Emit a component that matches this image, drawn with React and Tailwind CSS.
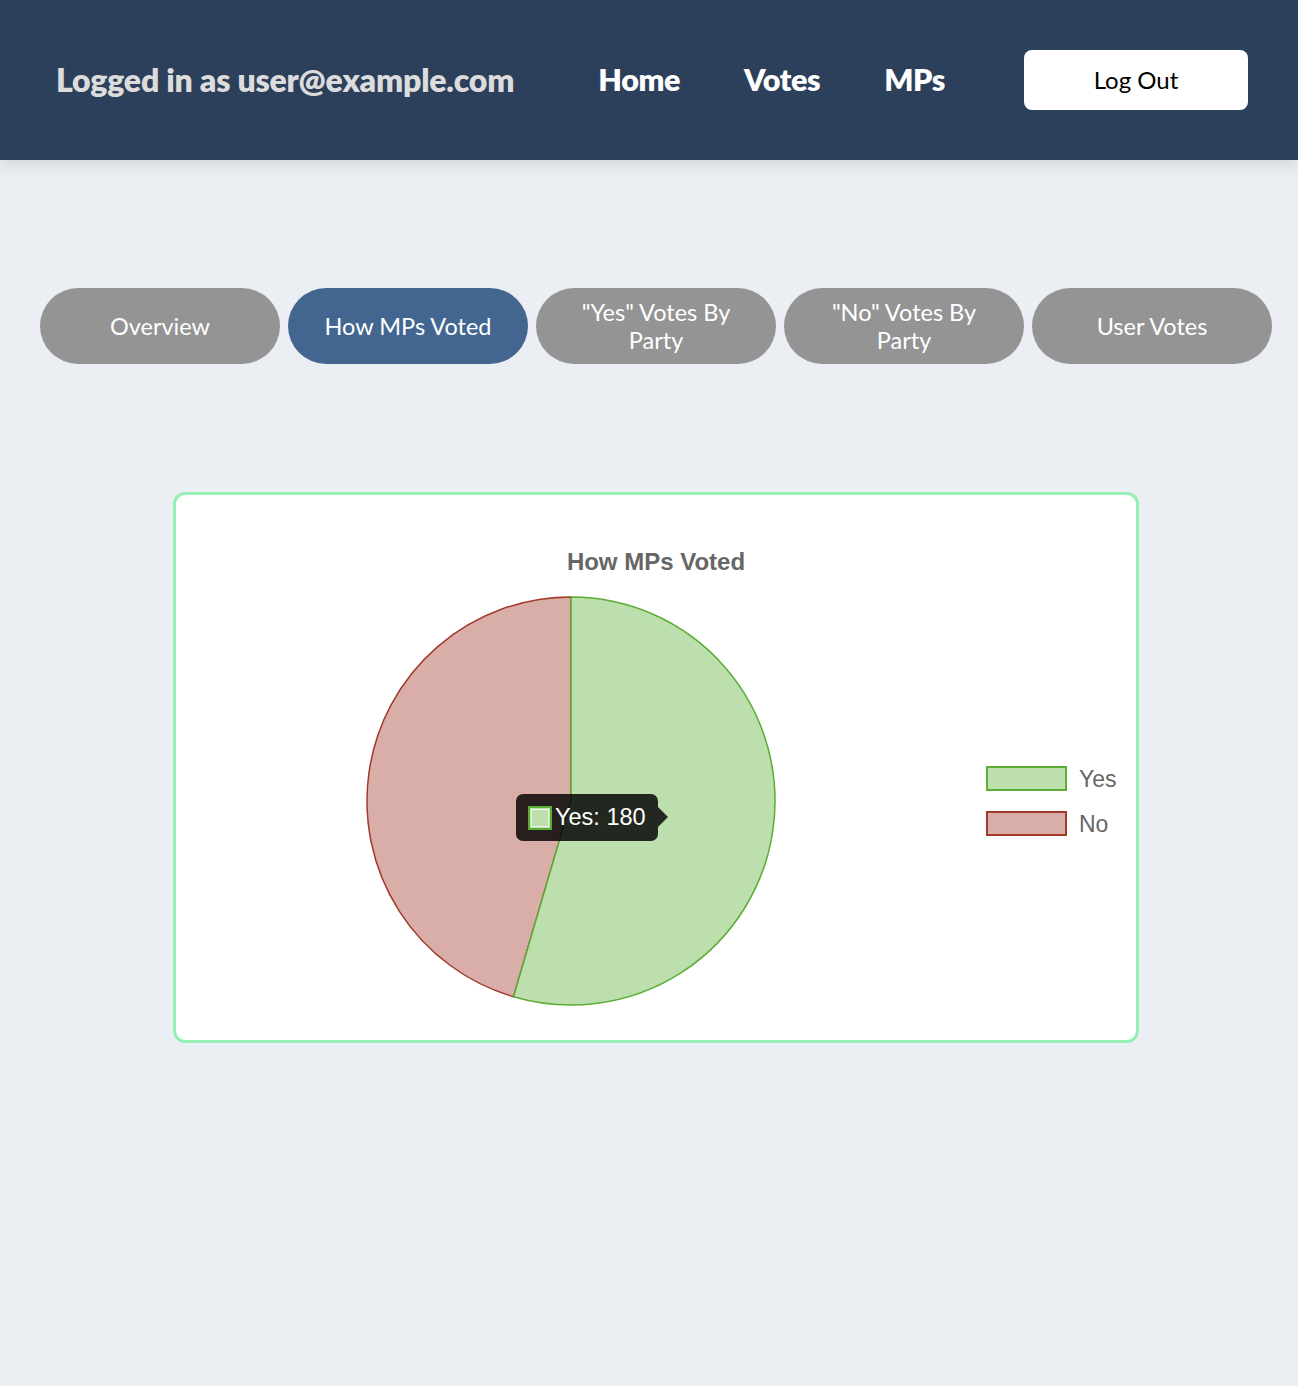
import React from "react";

const YES = 180;
const NO = 150;

function Pie() {
  const r = 204;
  const c = 206;
  const angle = (YES / (YES + NO)) * Math.PI * 2;
  const ex = c + r * Math.sin(angle);
  const ey = c - r * Math.cos(angle);
  const large = angle > Math.PI ? 1 : 0;
  const yesPath = `M ${c} ${c} L ${c} ${c - r} A ${r} ${r} 0 ${large} 1 ${ex} ${ey} Z`;
  const noPath = `M ${c} ${c} L ${ex} ${ey} A ${r} ${r} 0 ${1 - large} 1 ${c} ${c - r} Z`;
  return (
    <svg width="412" height="412" viewBox="0 0 412 412">
      <path d={noPath} fill="#d9aea8" stroke="#a23a2c" strokeWidth="1.5" />
      <path d={yesPath} fill="#bddfad" stroke="#5aad35" strokeWidth="1.5" />
    </svg>
  );
}

export default function App() {
  const tabs = ["Overview", "How MPs Voted", '"Yes" Votes By Party', '"No" Votes By Party', "User Votes"];

  return (
    <div className="min-h-[1386px] bg-[#ebeef3]" style={{ fontFamily: "Lato, 'Open Sans', sans-serif" }}>
      {/* Header */}
      <header className="h-[160px] bg-[#2c405c] shadow-[0_4px_16px_rgba(0,0,0,0.12)] flex items-center pl-[56px] pr-[50px]">
        <div className="text-[32px] font-extrabold text-[#dcdcdc] tracking-[-0.2px]">Logged in as user@example.com</div>
        <nav className="flex items-center ml-[84px] gap-[64px] text-[30.5px] font-extrabold text-white tracking-[-0.4px]">
          <a>Home</a>
          <a>Votes</a>
          <a>MPs</a>
        </nav>
        <button className="ml-auto w-[224px] h-[60px] bg-white rounded-[8px] text-[24px] text-black">Log Out</button>
      </header>

      {/* Tabs */}
      <div className="pl-[40px] w-[1272px] pt-[128px]">
        <div className="flex gap-[8px]">
          {tabs.map((t, i) => (
            <button
              key={t}
              className={
                "w-[240px] h-[76px] rounded-full px-[30px] text-[23.5px] leading-[28px] text-white " +
                (i === 1 ? "bg-[#436691]" : "bg-[#949494]")
              }
            >
              {t}
            </button>
          ))}
        </div>

        {/* Chart card */}
        <div className="mt-[128px] mx-auto w-[966px] h-[551px] bg-white border-[3px] border-[#96efb4] rounded-[12px] relative">
          <div
            className="pt-[53px] text-center text-[24px] font-bold text-[#666666] leading-[28px]"
            style={{ fontFamily: "'Liberation Sans', Arial, sans-serif" }}
          >
            How MPs Voted
          </div>
          <div className="flex items-center mt-[19px]">
            <div className="ml-[189px]">
              <Pie />
            </div>
            <div
              className="ml-[209px] flex flex-col gap-[20px] text-[23px] leading-[24px] text-[#666666]"
              style={{ fontFamily: "'Liberation Sans', Arial, sans-serif" }}
            >
              <div className="flex items-center gap-[12px]">
                <span className="w-[81px] h-[25px] bg-[#bddfad] border-2 border-[#5aad35]" />
                <span>Yes</span>
              </div>
              <div className="flex items-center gap-[12px]">
                <span className="w-[81px] h-[25px] bg-[#d9aea8] border-2 border-[#a23a2c]" />
                <span>No</span>
              </div>
            </div>
          </div>

          {/* Tooltip */}
          <div
            className="absolute left-[340px] top-[299px] h-[47px] w-[142px] bg-[rgba(0,0,0,0.82)] rounded-[7px] flex items-center pl-[12px] gap-[3px] text-white text-[23.5px]"
            style={{ fontFamily: "'Liberation Sans', Arial, sans-serif" }}
          >
            <span className="w-[24px] h-[24px] bg-[#bddfad] border-2 border-[#5aad35] outline outline-1 outline-white/70 -outline-offset-4" />
            <span>Yes: 180</span>
            <span className="absolute right-[-10px] top-[13px] w-0 h-0 border-y-[10px] border-y-transparent border-l-[10px] border-l-[rgba(0,0,0,0.82)]" />
          </div>
        </div>
      </div>
    </div>
  );
}
